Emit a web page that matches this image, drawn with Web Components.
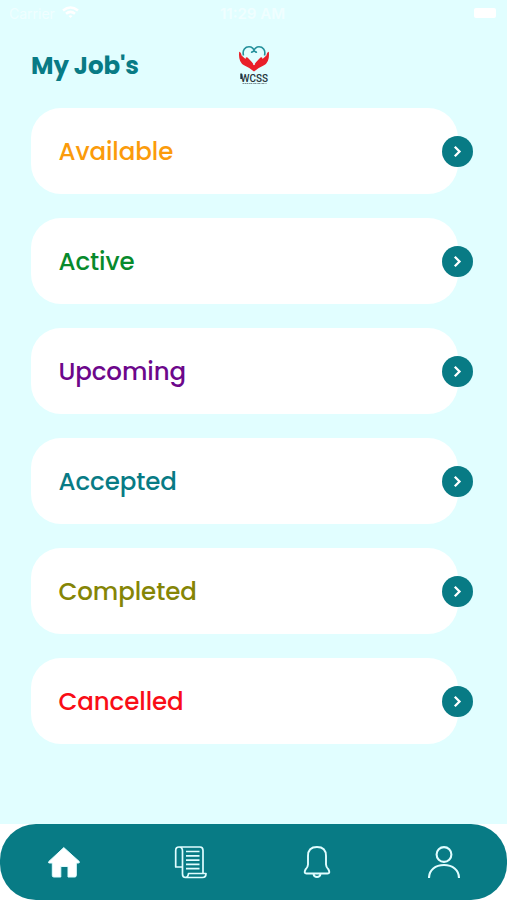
<!DOCTYPE html>
<html lang="en">
<head>
<meta charset="UTF-8">
<meta name="viewport" content="width=device-width, initial-scale=1.0">
<title>My Job's</title>
<style>
    :root {
        --primary-color: #087b85;
        --page-bg: #e1feff;
        --card-bg: #ffffff;
    }
    body {
        margin: 0;
        background: #ffffff;
        font-family: Poppins, Inter, "Open Sans", sans-serif;
    }
</style>
</head>
<body>
<jobs-app></jobs-app>

<script>
class StatusBar extends HTMLElement {
    constructor() {
        super();
        this.attachShadow({ mode: 'open' });
    }

    connectedCallback() {
        this.shadowRoot.innerHTML = `
        <style>
            :host {
                display: grid;
                grid-template-columns: 1fr auto 1fr;
                align-items: center;
                height: 27px;
                padding: 0 11px 0 9px;
                box-sizing: border-box;
                color: #f0feff;
                font: 14px/27px Inter, sans-serif;
            }
            .carrier { display: flex; align-items: center; gap: 7px; }
            .carrier svg { margin-top: -2px; }
            .time { font-weight: 600; font-size: 15px; }
            .battery {
                justify-self: end;
                width: 22px;
                height: 10px;
                margin-top: -1px;
                border-radius: 2px;
                background: #ffffff;
            }
        </style>
        <div class="carrier">
            <span>Carrier</span>
            <svg width="17" height="13" viewBox="0 0 17 13" fill="none" stroke="#ffffff" stroke-width="2.6">
                <path d="M1 4.5Q8.5-1.5 16 4.5M4 7.7Q8.5 4 13 7.7"/>
                <path d="M6.5 10L8.5 12L10.5 10Q8.5 8.5 6.5 10Z" fill="#ffffff" stroke="none"/>
            </svg>
        </div>
        <span class="time">11:29 AM</span>
        <span class="battery"></span>
        `;
    }
}

class BrandLogo extends HTMLElement {
    constructor() {
        super();
        this.attachShadow({ mode: 'open' });
    }

    connectedCallback() {
        this.shadowRoot.innerHTML = `
        <style>
            :host { display: block; width: 32px; height: 44px; }
            svg { display: block; }
        </style>
        <svg width="32" height="44" viewBox="0 -2 32 44">
            <path d="M5.5 10.5C4 4.5 7.500 1.800 11 1.800C14 1.800 16 4 16 5.500C16 4 18.500 1.800 21 1.800C24.500 1.800 28 4.500 26.500 10.500M13 7Q14.500 7.500 16 5.500Q17.500 7.500 19 7" fill="none" stroke="#23909b" stroke-width="1.6"/>
            <path d="M1.2 6.800Q2.800 6.800 3.600 10.500L7.500 14Q7.500 11.500 9.500 12.500L13.500 16.500Q15.500 18.500 16 20.500Q16.500 18.500 18.500 16.500L22.500 12.500Q24.500 11.500 24.500 14L28.400 10.500Q29.200 6.800 30.800 6.800Q32 17 26 20.300Q20 23 16 26.500Q12 23 6 20.300Q0 17 1.2 6.800Z" fill="#e91f29"/>
            <path d="M12.300 14.500Q16 18 16 20Q16 18 19.700 14.500" fill="none" stroke="#e1feff" stroke-width=".8"/>
            <text x="2.8" y="36.8" font-family="Roboto, sans-serif" font-size="11" font-weight="500" fill="#26343a" textLength="27.2" lengthAdjust="spacingAndGlyphs">WCSS</text>
            <path d="M3.2 28.500V34" stroke="#26343a" stroke-width="1.8"/>
            <path d="M4.5 38.500H28.500" stroke="#7d9195" stroke-width="1" stroke-dasharray="2 .5 1 .4"/>
        </svg>
        `;
    }
}

class PageHeader extends HTMLElement {
    constructor() {
        super();
        this.attachShadow({ mode: 'open' });
    }

    connectedCallback() {
        this.shadowRoot.innerHTML = `
        <style>
            :host {
                display: grid;
                grid-template-columns: 1fr auto 1fr;
                align-items: center;
                height: 81px;
                box-sizing: border-box;
                padding: 0 31px 5px;
            }
            h1 {
                margin: 1px 0 0;
                color: var(--primary-color);
                font-size: 24.5px;
                line-height: 30px;
                font-weight: 700;
                letter-spacing: -0.1px;
                white-space: nowrap;
            }
        </style>
        <h1><slot></slot></h1>
        <brand-logo></brand-logo>
        `;
    }
}

class JobCard extends HTMLElement {
    constructor() {
        super();
        this.attachShadow({ mode: 'open' });
    }

    connectedCallback() {
        const color = this.getAttribute('color');
        this.shadowRoot.innerHTML = `
        <style>
            :host {
                display: flex;
                align-items: center;
                justify-content: space-between;
                height: 86px;
                box-sizing: border-box;
                padding-left: 27.4px;
                border-radius: 30px;
                background: var(--card-bg);
            }
            .label {
                padding-top: 2px;
                color: ${color};
                font-size: 24.5px;
                line-height: 36px;
                font-weight: 500;
                letter-spacing: -0.08px;
            }
            /* the button straddles the right edge of the card */
            button {
                display: flex;
                align-items: center;
                justify-content: center;
                width: 31px;
                height: 31px;
                margin: 0 -15px 0 0;
                padding: 0;
                border: 0;
                border-radius: 50%;
                background: var(--primary-color);
            }
        </style>
        <span class="label"><slot></slot></span>
        <button aria-label="Open">
            <svg width="31" height="31" viewBox="0 0 31 31" fill="none" stroke="#ffffff" stroke-width="2.3">
                <path d="M12.8 10.8L17.5 15.5L12.8 20.2"/>
            </svg>
        </button>
        `;
    }
}

const icons = {
    home: `<path d="M16.800 1.600L32.300 15.600Q32.800 17 31.300 17H29.300V29.500Q29.300 31 27.800 31H21V20.500H13.800V31H6.800Q5.300 31 5.300 29.500V17H2.300Q.8 17 1.800 15.500Z" fill="#ffffff"/>`,
    jobs: `<g stroke-width="1.7">
        <path d="M8.500 5V28Q8.500 31.500 11.500 31.500H28.500Q32 31.500 32 27.500H14.500Q14 31.500 11 31.500M29 27.500V4.500Q29 1 26 1H5Q1.700 1 1.700 4.500V21H8.500M5 1Q8.500 1 8.500 5"/>
        <path d="M12 5.500H25.500M12 9.800H25.500M12 14.100H25.500M12 18.400H25.500M12 22.700H25.500"/>
    </g>`,
    alerts: `<g stroke-width="1.9">
        <path d="M7 18.500V10Q7 1 16 1T25 10V18.500Q25 21 27.500 23.500Q29.500 27.500 26.500 27.500H5.500Q2.500 27.500 4.500 23.500Q7 21 7 18.500Z"/>
        <path d="M12.500 28Q13 31 16 31T19.500 28"/>
    </g>`,
    profile: `<circle cx="16" cy="8.5" r="7.4" stroke-width="2.1"/><path d="M1 32C1 24 7.5 19 16 19S31 24 31 32" stroke-width="2.1"/>`
};

class NavItem extends HTMLElement {
    constructor() {
        super();
        this.attachShadow({ mode: 'open' });
    }

    connectedCallback() {
        this.shadowRoot.innerHTML = `
        <style>
            :host { display: flex; justify-content: center; align-items: center; padding-left: 1px; }
            svg { display: block; }
        </style>
        <svg width="33" height="33" viewBox="0 0 33 33" fill="none" stroke="#e0fdff" stroke-linejoin="round">
            ${icons[this.getAttribute('icon')]}
        </svg>
        `;
    }
}

class NavBar extends HTMLElement {
    constructor() {
        super();
        this.attachShadow({ mode: 'open' });
    }

    connectedCallback() {
        this.shadowRoot.innerHTML = `
        <style>
            :host {
                display: grid;
                grid-template-columns: repeat(4, 1fr);
                height: 76px;
                border-radius: 36px;
                background: var(--primary-color);
            }
        </style>
        <nav-item icon="home"></nav-item>
        <nav-item icon="jobs"></nav-item>
        <nav-item icon="alerts"></nav-item>
        <nav-item icon="profile"></nav-item>
        `;
    }
}

class JobsApp extends HTMLElement {
    constructor() {
        super();
        this.attachShadow({ mode: 'open' });
    }

    connectedCallback() {
        this.shadowRoot.innerHTML = `
        <style>
            :host {
                display: flex;
                flex-direction: column;
                height: 900px;
                overflow: hidden;
            }
            main { flex: 1; background: var(--page-bg); }
            .list {
                display: flex;
                flex-direction: column;
                gap: 24px;
                padding: 0 49px 0 31px;
            }
        </style>
        <main>
            <status-bar></status-bar>
            <page-header>My Job's</page-header>
            <div class="list">
                <job-card color="#fb9b0b">Available</job-card>
                <job-card color="#078a2c">Active</job-card>
                <job-card color="#6d078b">Upcoming</job-card>
                <job-card color="#087b85">Accepted</job-card>
                <job-card color="#858506">Completed</job-card>
                <job-card color="#f90d17">Cancelled</job-card>
            </div>
        </main>
        <nav-bar></nav-bar>
        `;
    }
}

customElements.define('status-bar', StatusBar);
customElements.define('brand-logo', BrandLogo);
customElements.define('page-header', PageHeader);
customElements.define('job-card', JobCard);
customElements.define('nav-item', NavItem);
customElements.define('nav-bar', NavBar);
customElements.define('jobs-app', JobsApp);
</script>
</body>
</html>
